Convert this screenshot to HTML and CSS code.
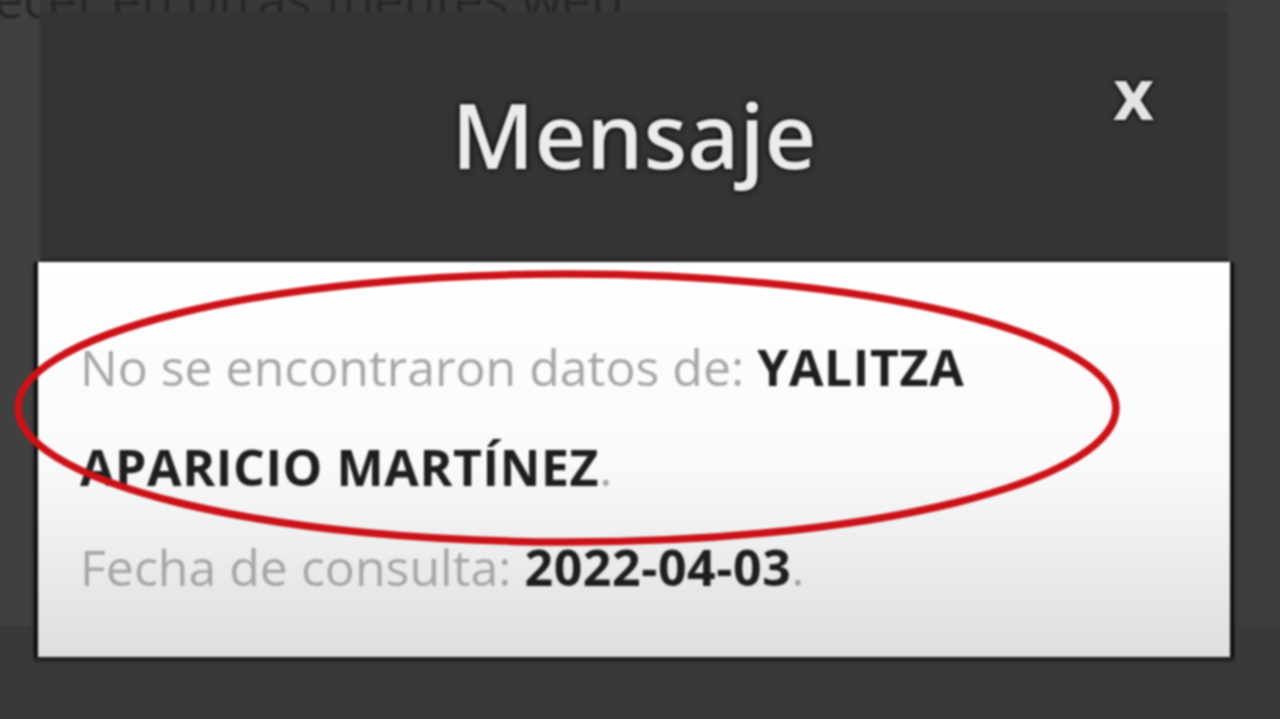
FILE: index.html
```html
<!DOCTYPE html>
<html lang="es">
<head>
<meta charset="utf-8">
<title>Mensaje</title>
<link rel="stylesheet" href="styles.css">
</head>
<body>
<div class="screen">
  <div class="page">
    <div class="page-strip-left"></div>
    <div class="page-strip-right"></div>
    <p class="page-text">ecer en otras fuentes web</p>
  </div>
  <div class="modal">
    <div class="modal-header">
      <h1 class="modal-title">Mensaje</h1>
      <span class="modal-close">x</span>
    </div>
    <div class="modal-body">
      <p class="line"><span class="muted">No se encontraron datos de: </span><b>YALITZA</b></p>
      <p class="line"><b>APARICIO MARTÍNEZ</b><span class="muted">.</span></p>
      <p class="line"><span class="muted">Fecha de consulta: </span><b>2022-04-03</b><span class="muted">.</span></p>
    </div>
  </div>
  <svg class="mark" width="1280" height="719" viewBox="0 0 1280 719">
    <ellipse cx="567" cy="408" rx="549" ry="134" fill="none" stroke="#cc1219" stroke-width="7.5"/>
  </svg>
</div>
</body>
</html>
```

FILE: styles.css
```css
html, body {
  margin: 0;
  padding: 0;
  background: #393939;
}
.screen {
  position: relative;
  width: 1280px;
  height: 719px;
  overflow: hidden;
  background: #393939;
  font-family: "Open Sans", "Noto Sans", sans-serif;
  filter: blur(1px);
}
.page {
  position: relative;
  height: 719px;
}
.page-strip-left {
  position: absolute;
  left: 0;
  top: 0;
  width: 40px;
  height: 660px;
  background: #404040;
}
.page-strip-right {
  position: absolute;
  right: 0;
  top: 0;
  width: 52px;
  height: 660px;
  background: #3d3d3d;
}
.page-text {
  position: relative;
  margin: -34px 0 0 -6px;
  font-size: 52px;
  line-height: 64px;
  color: #262626;
  white-space: nowrap;
}
.modal {
  position: absolute;
  left: 40px;
  top: 12px;
  width: 1188px;
}
.modal-header {
  position: relative;
  height: 246px;
  background: #333436;
  border-bottom: 4px solid #28292a;
  display: flex;
  align-items: center;
  justify-content: center;
}
.modal-title {
  margin: -3px 0 0 0;
  font-size: 90px;
  font-weight: 600;
  color: #ececec;
  line-height: 1;
  text-shadow: 0 0 3px #000, 0 0 6px #000;
}
.modal-close {
  position: absolute;
  right: 74px;
  top: 45px;
  font-size: 71px;
  font-weight: 700;
  line-height: 71px;
  color: #e4e4e4;
  text-shadow: 0 0 3px #000, 0 0 5px #000;
}
.modal-body {
  margin: 0 -6px;
  padding: 55px 42px 40px 42px;
  border-left: 4px solid #111;
  border-right: 4px solid #111;
  background: linear-gradient(#ffffff, #fafafa 50%, #dedede);
  box-shadow: 0 4px 3px #1c1c1c;
}
.line {
  margin: 0;
  font-size: 50px;
  line-height: 100px;
  white-space: nowrap;
}
.muted {
  color: #a6a6a6;
}
.line b {
  color: #1e1e1e;
  font-weight: 700;
  letter-spacing: 0.6px;
}
.mark {
  position: absolute;
  left: 0;
  top: 0;
}
```
